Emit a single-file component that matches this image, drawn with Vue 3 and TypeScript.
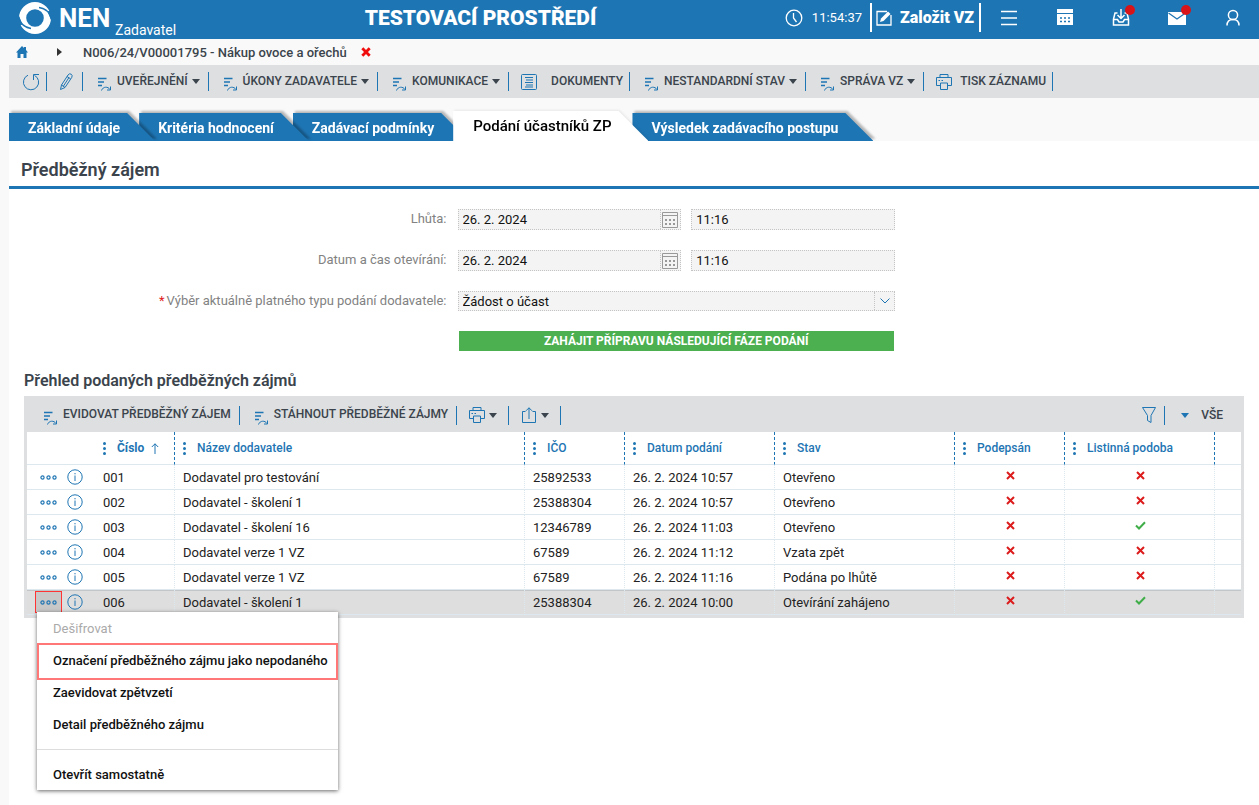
<script setup lang="ts">
import { ref } from 'vue'

interface ToolItem {
  label: string
  icon: 'refresh' | 'pencil' | 'flow' | 'doc' | 'print'
  text: string
  menu: boolean
}

interface Row {
  id: string
  name: string
  ico: string
  date: string
  state: string
  signed: boolean
  paper: boolean
}

const tools: ToolItem[] = [
  { label: 'Obnovit', icon: 'refresh', text: '', menu: false },
  { label: 'Upravit', icon: 'pencil', text: '', menu: false },
  { label: 'Uveřejnění', icon: 'flow', text: 'UVEŘEJNĚNÍ', menu: true },
  { label: 'Úkony zadavatele', icon: 'flow', text: 'ÚKONY ZADAVATELE', menu: true },
  { label: 'Komunikace', icon: 'flow', text: 'KOMUNIKACE', menu: true },
  { label: 'Dokumenty', icon: 'doc', text: 'DOKUMENTY', menu: false },
  { label: 'Nestandardní stav', icon: 'flow', text: 'NESTANDARDNÍ STAV', menu: true },
  { label: 'Správa VZ', icon: 'flow', text: 'SPRÁVA VZ', menu: true },
  { label: 'Tisk záznamu', icon: 'print', text: 'TISK ZÁZNAMU', menu: false },
]

const tabs = ['Základní údaje', 'Kritéria hodnocení', 'Zadávací podmínky', 'Podání účastníků ZP', 'Výsledek zadávacího postupu']
const activeTab = ref(3)

const rows: Row[] = [
  { id: '001', name: 'Dodavatel pro testování', ico: '25892533', date: '26. 2. 2024 10:57', state: 'Otevřeno', signed: false, paper: false },
  { id: '002', name: 'Dodavatel - školení 1', ico: '25388304', date: '26. 2. 2024 10:57', state: 'Otevřeno', signed: false, paper: false },
  { id: '003', name: 'Dodavatel - školení 16', ico: '12346789', date: '26. 2. 2024 11:03', state: 'Otevřeno', signed: false, paper: true },
  { id: '004', name: 'Dodavatel verze 1 VZ', ico: '67589', date: '26. 2. 2024 11:12', state: 'Vzata zpět', signed: false, paper: false },
  { id: '005', name: 'Dodavatel verze 1 VZ', ico: '67589', date: '26. 2. 2024 11:16', state: 'Podána po lhůtě', signed: false, paper: false },
  { id: '006', name: 'Dodavatel - školení 1', ico: '25388304', date: '26. 2. 2024 10:00', state: 'Otevírání zahájeno', signed: false, paper: true },
]

const columns = ['Číslo', 'Název dodavatele', 'IČO', 'Datum podání', 'Stav', 'Podepsán', 'Listinná podoba']
const openRow = ref('006')
const dateLimit = ref('26. 2. 2024')
const timeLimit = ref('11:16')
const dateOpen = ref('26. 2. 2024')
const timeOpen = ref('11:16')
const kind = ref('Žádost o účast')
</script>

<template>
  <div class="page">
    <header class="top">
      <a class="brand" href="#">
        <svg class="brand-mark" viewBox="0 0 32 32" width="32" height="32" aria-hidden="true">
          <path fill="#fff" fill-rule="evenodd" d="M16 0a16 16 0 1 1 0 32a16 16 0 0 1 0-32ZM16 7.200a8.800 8.800 0 1 0 0 17.600a8.800 8.800 0 0 0 0-17.600Z" />
          <path fill="none" stroke="#1e75b3" stroke-width="1.500" d="M-.5 15c1.500 6.500 5.500 10.500 12.500 11.500M32.500 17c-1.500-6.500-5.500-10.500-12.500-11.500" />
          <path fill="#1e75b3" d="M0 14l3.500 8.500l-2.500 1L-1 18ZM32 18l-3.500-8.500l2.500-1L33 14Z" />
        </svg>
        <span class="brand-name">NEN</span>
        <span class="brand-role">Zadavatel</span>
      </a>
      <strong class="env">TESTOVACÍ PROSTŘEDÍ</strong>
      <div class="clock">
        <svg viewBox="0 0 18 18" width="18" height="18" fill="none" stroke="#fff" stroke-width="1.300" aria-hidden="true">
          <circle cx="9" cy="9" r="7.800" /><path d="M8.500 4v5l3 4" />
        </svg>
        <time>11:54:37</time>
      </div>
      <button class="create" type="button">
        <svg viewBox="0 0 16 16" width="16" height="16" aria-hidden="true">
          <path fill="none" stroke="#fff" stroke-width="1.300" d="M11 1.500H1v13.500h14V5" />
          <path fill="#fff" d="M4 12l1-3.500L12 1.500l2.500 2.500l-7 7Z" />
        </svg>
        Založit VZ
      </button>
      <nav class="top-icons" aria-label="Uživatelské nástroje">
        <button type="button" aria-label="Nabídka">
          <svg viewBox="0 0 24 24" width="24" height="24" fill="none" stroke="#fff" stroke-width="1.500"><path d="M4 5.500h16M4 12h16M4 18.500h16" /></svg>
        </button>
        <button type="button" aria-label="Kalendář">
          <svg viewBox="0 0 24 24" width="24" height="24"><path fill="#fff" d="M4 3h16v4H4ZM4 8h16v11H4Z" /><path stroke="#1e75b3" stroke-width="1.500" stroke-dasharray="2 2" d="M7 12h10M7 15.500h10" /></svg>
        </button>
        <button type="button" aria-label="Doručené">
          <svg viewBox="0 0 24 24" width="24" height="24" fill="none" stroke="#fff" stroke-width="1.500">
            <path d="M8.500 7H6l-1.500 6v6h15v-6L18 7h-2.500M4.500 13.500h4l1.500 2.500h4l1.500-2.500h4M12 3v9M8.500 9L12 12.500L15.500 9" />
          </svg>
          <i class="badge"></i>
        </button>
        <button type="button" aria-label="Zprávy">
          <svg viewBox="0 0 24 24" width="24" height="24"><path fill="#fff" d="M3 6h18v13H3Z" /><path fill="none" stroke="#1e75b3" stroke-width="1.300" d="M3.500 7l8.500 6l8.500-6" /></svg>
          <i class="badge"></i>
        </button>
        <button type="button" aria-label="Profil">
          <svg viewBox="0 0 24 24" width="24" height="24" fill="none" stroke="#fff" stroke-width="1.500"><circle cx="12" cy="9" r="4.600" /><path d="M6 19.500c0-4 2.200-6 6-6s6 2 6 6" /></svg>
        </button>
      </nav>
    </header>

    <nav class="crumbs" aria-label="Drobečková navigace">
      <a href="#" aria-label="Domů">
        <svg viewBox="0 0 12 12" width="12" height="12"><path fill="#1e75b3" d="M6 0l2 2V1h2v3l2 2.500h-1.500V12H7.500V8h-3v4H1.500V6.500H0Z" /></svg>
      </a>
      <svg class="crumb-arrow" viewBox="0 0 5 8" width="5" height="8" aria-hidden="true"><path fill="#333" d="M0 0l5 4l-5 4Z" /></svg>
      <a class="crumb-name" href="#">N006/24/V00001795 - Nákup ovoce a ořechů</a>
      <button type="button" aria-label="Zavřít záznam">
        <svg viewBox="0 0 10 10" width="10" height="10"><path stroke="#f00d0d" stroke-width="2.800" d="M1.300 1.300l7.400 7.400M8.700 1.300l-7.400 7.400" /></svg>
      </button>
    </nav>

    <div class="toolbar" role="toolbar" aria-label="Akce záznamu">
      <button v-for="t in tools" :key="t.label" type="button" class="tool" :class="'tool-' + t.icon" :aria-label="t.label">
        <svg v-if="t.icon === 'refresh'" viewBox="0 0 18 18" width="18" height="18" class="line"><path d="M6 2.200A7.600 7.600 0 1 0 12.500 2.400M17 1.500h-5.500v5.500" /></svg>
        <svg v-else-if="t.icon === 'pencil'" viewBox="0 0 14 18" width="14" height="18" class="line"><path d="M1.500 16.500l1-4.500L9 2q1.500-2 3.200-.8t.5 3.300L6 14.500ZM2.500 12l3.500 2.500M8 3.500l3.500 2.300M9.800 4.800L4.500 13" /></svg>
        <svg v-else-if="t.icon === 'flow'" viewBox="0 0 14 14" width="14" height="14" class="line flow"><path d="M1 1.500h8.500M1 5h6M1 8.500h4" stroke-width="1.300" /><path d="M4.500 13.500c1.500-4.200 6.500-4.200 8.500-1M13.500 9.500v3.500h-3.500" /></svg>
        <svg v-else-if="t.icon === 'doc'" viewBox="0 0 16 16" width="16" height="16" class="line"><rect x=".5" y=".5" width="15" height="15" rx="1" /><path d="M4 3.500h8M5 6h7M4 8.500h8M5 11h7M4 13h8" /></svg>
        <svg v-else viewBox="0 0 16 16" width="16" height="16" class="line"><path d="M4 11.500H.5v-8h15v8H12M4 3.500v-3h8v3M4.500 9h7v6.500h-7ZM2.500 6.500h1.500M5.500 6.500H7" /></svg>
        <span v-if="t.text">{{ t.text }}</span>
        <svg v-if="t.menu" class="caret" viewBox="0 0 8 5" width="8" height="5"><path d="M0 0h8L4 5Z" /></svg>
      </button>
    </div>

    <div class="tabs" role="tablist">
      <div v-for="(t, i) in tabs" :key="t" class="tab-wrap" :class="{ active: i === activeTab }" :style="{ zIndex: i === activeTab ? 9 : 8 - i }">
        <button type="button" role="tab" class="tab" :aria-selected="i === activeTab" @click="activeTab = i">{{ t }}</button>
      </div>
    </div>

    <main class="panel">
      <h1>Předběžný zájem</h1>

      <form class="form" @submit.prevent>
        <label for="limit-date">Lhůta:</label>
        <div class="pair">
          <div class="field date">
            <input id="limit-date" v-model="dateLimit" type="text" />
            <button type="button" aria-label="Vybrat datum">
              <svg viewBox="0 0 16 16" width="16" height="16" class="cal"><path d="M.5.500h15v15H.5ZM.5 3.500h15" /><path stroke-dasharray="2 2" stroke-width="2" d="M3 8h10M3 12h10" /></svg>
            </button>
          </div>
          <div class="field time"><input v-model="timeLimit" type="text" aria-label="Lhůta – čas" /></div>
        </div>
        <label for="open-date">Datum a čas otevírání:</label>
        <div class="pair">
          <div class="field date">
            <input id="open-date" v-model="dateOpen" type="text" />
            <button type="button" aria-label="Vybrat datum">
              <svg viewBox="0 0 16 16" width="16" height="16" class="cal"><path d="M.5.500h15v15H.5ZM.5 3.500h15" /><path stroke-dasharray="2 2" stroke-width="2" d="M3 8h10M3 12h10" /></svg>
            </button>
          </div>
          <div class="field time"><input v-model="timeOpen" type="text" aria-label="Čas otevírání" /></div>
        </div>
        <label for="kind"><em>*</em>Výběr aktuálně platného typu podání dodavatele:</label>
        <div class="field pick">
          <select id="kind" v-model="kind"><option>Žádost o účast</option></select>
          <span class="pick-arrow"><svg viewBox="0 0 10 6" width="10" height="6" class="line"><path d="M.5.500L5 5L9.500.500" /></svg></span>
        </div>
        <button class="submit" type="submit">ZAHÁJIT PŘÍPRAVU NÁSLEDUJÍCÍ FÁZE PODÁNÍ</button>
      </form>

      <section class="list">
        <h2>Přehled podaných předběžných zájmů</h2>
        <div class="grid">
          <div class="grid-bar" role="toolbar" aria-label="Akce seznamu">
            <button v-for="t in ['EVIDOVAT PŘEDBĚŽNÝ ZÁJEM', 'STÁHNOUT PŘEDBĚŽNÉ ZÁJMY']" :key="t" type="button" class="tool tool-flow">
              <svg viewBox="0 0 14 14" width="14" height="14" class="line flow"><path d="M1 1.500h8.500M1 5h6M1 8.500h4" stroke-width="1.300" /><path d="M4.500 13.500c1.500-4.200 6.500-4.200 8.500-1M13.500 9.500v3.500h-3.500" /></svg>
              <span>{{ t }}</span>
            </button>
            <button type="button" class="tool short" aria-label="Tisk">
              <svg viewBox="0 0 16 16" width="16" height="16" class="line"><path d="M4 11.500H.5v-8h15v8H12M4 3.500v-3h8v3M4.500 9h7v6.500h-7ZM2.500 6.500h1.500M5.500 6.500H7" /></svg>
              <svg class="caret" viewBox="0 0 8 5" width="8" height="5"><path d="M0 0h8L4 5Z" /></svg>
            </button>
            <button type="button" class="tool short" aria-label="Export">
              <svg viewBox="0 0 16 16" width="16" height="16" class="line"><path d="M4.500 4.500h-3v11h13v-11h-3M8 12V.800M5 3.800L8 .800l3 3" /></svg>
              <svg class="caret" viewBox="0 0 8 5" width="8" height="5"><path d="M0 0h8L4 5Z" /></svg>
            </button>
            <button type="button" class="tool filter" aria-label="Filtr">
              <svg viewBox="0 0 14 16" width="14" height="16" class="line"><path d="M.5.500h13L9 8.500v7l-3.500-2V8.500Z" /></svg>
            </button>
            <button type="button" class="all">
              <svg class="caret" viewBox="0 0 8 5" width="8" height="5"><path d="M0 0h8L4 5Z" /></svg>VŠE
            </button>
          </div>
          <table>
            <colgroup>
              <col class="c-act" /><col class="c-num" /><col class="c-name" /><col class="c-ico" /><col class="c-date" /><col class="c-state" /><col class="c-sign" /><col class="c-paper" /><col />
            </colgroup>
            <thead>
              <tr>
                <th></th>
                <th v-for="(c, i) in columns" :key="c" scope="col" :class="{ sorted: i === 0 }">
                  <span class="head">
                    <svg viewBox="0 0 3 13" width="3" height="13" fill="#1e75b3"><circle cx="1.500" cy="1.500" r="1.500" /><circle cx="1.500" cy="6.500" r="1.500" /><circle cx="1.500" cy="11.500" r="1.500" /></svg>
                    {{ c }}
                    <svg v-if="i === 0" viewBox="0 0 8 11" width="8" height="11" class="line"><path d="M4 11V.800M.800 4L4 .800L7.200 4" /></svg>
                  </span>
                </th>
                <th></th>
              </tr>
            </thead>
            <tbody>
              <tr v-for="r in rows" :key="r.id" :class="{ selected: r.id === openRow }">
                <td class="act">
                  <div class="acts">
                    <button type="button" class="dots" aria-label="Akce řádku" @click="openRow = r.id">
                      <svg viewBox="0 0 17 5" width="17" height="5" class="line"><circle cx="2.500" cy="2.500" r="1.600" /><circle cx="8.500" cy="2.500" r="1.600" /><circle cx="14.500" cy="2.500" r="1.600" /></svg>
                    </button>
                    <button type="button" class="info" aria-label="Informace">
                      <svg viewBox="0 0 16 16" width="16" height="16" class="line"><circle cx="8" cy="8" r="7.200" /><path d="M8 6.500v5.500M8 4v1.300" /></svg>
                    </button>
                    <div v-if="r.id === openRow" class="menu" role="menu">
                      <button type="button" role="menuitem" disabled>Dešifrovat</button>
                      <button type="button" role="menuitem" class="marked">Označení předběžného zájmu jako nepodaného</button>
                      <button type="button" role="menuitem">Zaevidovat zpětvzetí</button>
                      <button type="button" role="menuitem">Detail předběžného zájmu</button>
                      <hr />
                      <button type="button" role="menuitem">Otevřít samostatně</button>
                    </div>
                  </div>
                </td>
                <td>{{ r.id }}</td>
                <td>{{ r.name }}</td>
                <td>{{ r.ico }}</td>
                <td>{{ r.date }}</td>
                <td>{{ r.state }}</td>
                <td v-for="(v, k) in [r.signed, r.paper]" :key="k" class="flag">
                  <svg v-if="v" viewBox="0 0 11 9" width="11" height="9" role="img" aria-label="Ano"><path fill="none" stroke="#3fae49" stroke-width="2" d="M1 4.500l3 3L10 1.200" /></svg>
                  <svg v-else viewBox="0 0 9 9" width="9" height="9" role="img" aria-label="Ne"><path stroke="#dc1c1c" stroke-width="2" d="M1 1l7 7M8 1L1 8" /></svg>
                </td>
                <td></td>
              </tr>
            </tbody>
          </table>
        </div>
      </section>
    </main>
  </div>
</template>

<style>
html,
body {
  background: #f9f9f9;
}
</style>

<style scoped>
.page {
  --blue: #1e75b3;
  --bar: #dddfe1;
  --ink: #3b444c;
  min-height: 100vh;
  display: flex;
  flex-direction: column;
  font-family: Roboto, "Liberation Sans", sans-serif;
  font-size: 13px;
  color: #222;
}
* {
  box-sizing: border-box;
}
button,
input,
select {
  font: inherit;
  color: inherit;
  background: none;
  border: 0;
  padding: 0;
  margin: 0;
}
a {
  color: inherit;
  text-decoration: none;
}
svg {
  display: block;
  flex: none;
}
.line {
  fill: none;
  stroke: var(--blue);
  stroke-width: 1;
}
.top {
  height: 39px;
  display: flex;
  align-items: center;
  background: var(--blue);
  color: #fff;
  padding: 0 14px 4px 19px;
}
.brand {
  display: flex;
  align-items: flex-end;
}
.brand-mark {
  align-self: center;
  margin-right: 8px;
}
.brand-name {
  width: 56px;
  font-size: 26px;
  font-weight: 700;
  line-height: 32px;
}
.brand-role {
  font-size: 14px;
  line-height: 16px;
  margin-bottom: -4px;
}
.env {
  flex: 1;
  text-align: center;
  font-size: 21px;
  font-weight: 900;
}
.clock {
  display: flex;
  align-items: center;
  gap: 9px;
  padding-right: 8px;
}
.create {
  display: flex;
  align-items: center;
  gap: 8px;
  height: 29px;
  padding: 0 5px 0 4px;
  border: solid #fff;
  border-width: 0 2px;
  font-size: 16px;
  font-weight: 900;
}
.top-icons {
  display: flex;
  gap: 32px;
  padding-left: 16px;
}
.top-icons button {
  position: relative;
}
.badge {
  position: absolute;
  top: -1px;
  right: -2px;
  width: 10px;
  height: 10px;
  border-radius: 50%;
  background: #d91418;
}
.crumbs {
  height: 26px;
  display: flex;
  align-items: center;
  padding: 0 16px;
  color: var(--ink);
  font-weight: 500;
}
.crumb-arrow {
  margin: 0 21px 0 29px;
}
.crumb-name {
  margin-right: 14px;
}
.toolbar {
  display: flex;
  height: 33px;
  margin-left: 9px;
  padding: 7px 0;
  background: var(--bar);
}
.tool {
  display: flex;
  align-items: center;
  height: 19px;
  padding: 0 8px 0 14px;
  border-right: 1px solid var(--blue);
  color: var(--ink);
  font-size: 12px;
  font-weight: 500;
  white-space: nowrap;
}
.tool-refresh {
  padding: 0 6px 0 13px;
}
.tool-pencil {
  padding: 0 9px 0 12px;
}
.tool-doc,
.tool-print {
  padding: 0 6px 0 12px;
}
.tool span {
  margin-left: 6px;
  padding-bottom: 2px;
}
.tool-doc span {
  margin-left: 14px;
}
.tool-print span {
  margin-left: 8px;
}
.flow {
  align-self: flex-end;
}
.caret {
  margin-left: 4px;
  fill: var(--ink);
}
.tabs {
  display: flex;
  align-items: flex-end;
  height: 43px;
  margin-left: 9px;
  overflow: hidden;
}
.tab-wrap {
  position: relative;
  margin-right: -16px;
  filter: drop-shadow(2px -2px 1px #0004);
}
.tab {
  display: block;
  height: 28px;
  padding: 2px 35px 0 19px;
  background: var(--blue);
  color: #fff;
  font-size: 14px;
  font-weight: 700;
  clip-path: polygon(0 0, calc(100% - 28px) 0, 100% 100%, 0 100%);
}
.active {
  filter: drop-shadow(1px -1px 1px #0001);
}
.active .tab {
  height: 30px;
  padding: 0 37px 0 20px;
  background: #fff;
  color: #000;
  font-size: 15px;
  font-weight: 500;
  clip-path: polygon(0 0, calc(100% - 30px) 0, 100% 100%, 0 100%);
}
.panel {
  flex: 1;
  margin-left: 9px;
  background: #fff;
}
h1 {
  margin: 0;
  height: 48px;
  padding: 17px 12px 0;
  border-bottom: 3px solid var(--blue);
  color: var(--ink);
  font-size: 18px;
  font-weight: 600;
  line-height: 24px;
}
.form {
  display: grid;
  grid-template-columns: 35% 35%;
  column-gap: 11px;
  row-gap: 20px;
  padding-top: 20px;
}
.form label {
  text-align: right;
  line-height: 19px;
  color: #828282;
}
.form em {
  margin-right: 2px;
  color: #e01b1b;
  font-style: normal;
}
.pair {
  display: flex;
  gap: 10px;
}
.field {
  display: flex;
  height: 21px;
  background: #f4f4f4;
  border: 1px dotted #c4c4c4;
  color: #111;
}
.date {
  flex: 224 1 0;
}
.time {
  flex: 204 1 0;
}
.field input,
.field select {
  flex: 1;
  min-width: 0;
  padding: 0 4px;
  appearance: none;
}
.field button {
  width: 20px;
  padding-left: 1px;
  border-left: 1px dotted #c4c4c4;
}
.cal {
  fill: none;
  stroke: #999;
}
.pick {
  height: 20px;
}
.pick-arrow {
  display: grid;
  place-items: center;
  width: 20px;
  border-left: 1px dotted #c4c4c4;
}
.submit {
  grid-column: 2;
  height: 20px;
  margin: 0 1px;
  background: #4caf50;
  color: #fff;
  font-size: 12px;
  font-weight: 700;
}
.list {
  padding: 20px 15px;
}
h2 {
  margin: 0;
  height: 25px;
  color: var(--ink);
  font-size: 16px;
  font-weight: 600;
  line-height: 20px;
}
.grid {
  background: var(--bar);
  padding: 0 3px 3px;
}
.grid-bar {
  display: flex;
  align-items: center;
  height: 36px;
  padding: 2px 0 0 2px;
}
.short {
  padding-right: 11px;
  padding-left: 12px;
}
.filter {
  margin-left: auto;
  padding: 0 8px 0 0;
}
.all {
  display: flex;
  align-items: center;
  gap: 12px;
  padding: 0 18px 0 12px;
  color: var(--ink);
  font-size: 12px;
  font-weight: 500;
}
.all .caret {
  fill: var(--blue);
}
table {
  width: 100%;
  table-layout: fixed;
  border-collapse: separate;
  border-spacing: 0;
  background: #fff;
}
.c-act { width: 68px; }
.c-num { width: 80px; }
.c-name { width: 350px; }
.c-ico { width: 100px; }
.c-date { width: 150px; }
.c-state { width: 180px; }
.c-sign { width: 110px; }
.c-paper { width: 150px; }
th,
td {
  padding: 0 8px;
  text-align: left;
  white-space: nowrap;
  border-bottom: 1px solid #dde7ee;
  border-right: 1px dotted #dde7ee;
}
th {
  height: 33px;
  color: var(--blue);
  font-size: 12px;
  font-weight: 500;
  border-right: 1px dashed var(--blue);
}
td {
  height: 25px;
}
th:first-child,
td:first-child,
th:last-child,
td:last-child {
  border-right: 0;
}
.head {
  display: flex;
  align-items: center;
  gap: 11px;
}
.sorted .head {
  font-weight: 700;
}
.head .line {
  margin-left: -4px;
}
td.flag {
  padding: 0 0 0 2px;
}
.flag svg {
  margin: 0 auto 3px;
}
td.act {
  padding: 0;
}
.acts {
  position: relative;
  display: flex;
  align-items: center;
  height: 24px;
  padding-left: 9px;
}
.dots {
  display: grid;
  place-items: center;
  width: 25px;
  height: 20px;
}
.dots .line {
  stroke-width: 1.2;
}
.info {
  margin-left: 6px;
}
.selected td {
  background: #dedede;
  box-shadow: inset 0 1px #c2c6c8;
}
.selected .dots {
  background: #c8c8c8;
  outline: 1px solid #f33;
}
.menu {
  position: absolute;
  z-index: 10;
  top: 22px;
  left: 10px;
  width: 301px;
  background: #fff;
  box-shadow: 0 1px 4px #0009;
}
.menu button {
  display: block;
  width: 100%;
  height: 32px;
  padding: 0 16px;
  text-align: left;
  font-weight: 500;
  color: #111;
}
.menu button:disabled {
  color: #aaa;
  font-weight: 400;
}
.menu .marked {
  position: relative;
}
.marked::after {
  content: "";
  position: absolute;
  inset: -1px 0 -4px;
  border: 2px solid #f77;
}
.menu hr {
  margin: 9px 0 8px;
  border: 0;
  border-top: 1px solid #ddd;
}
</style>
